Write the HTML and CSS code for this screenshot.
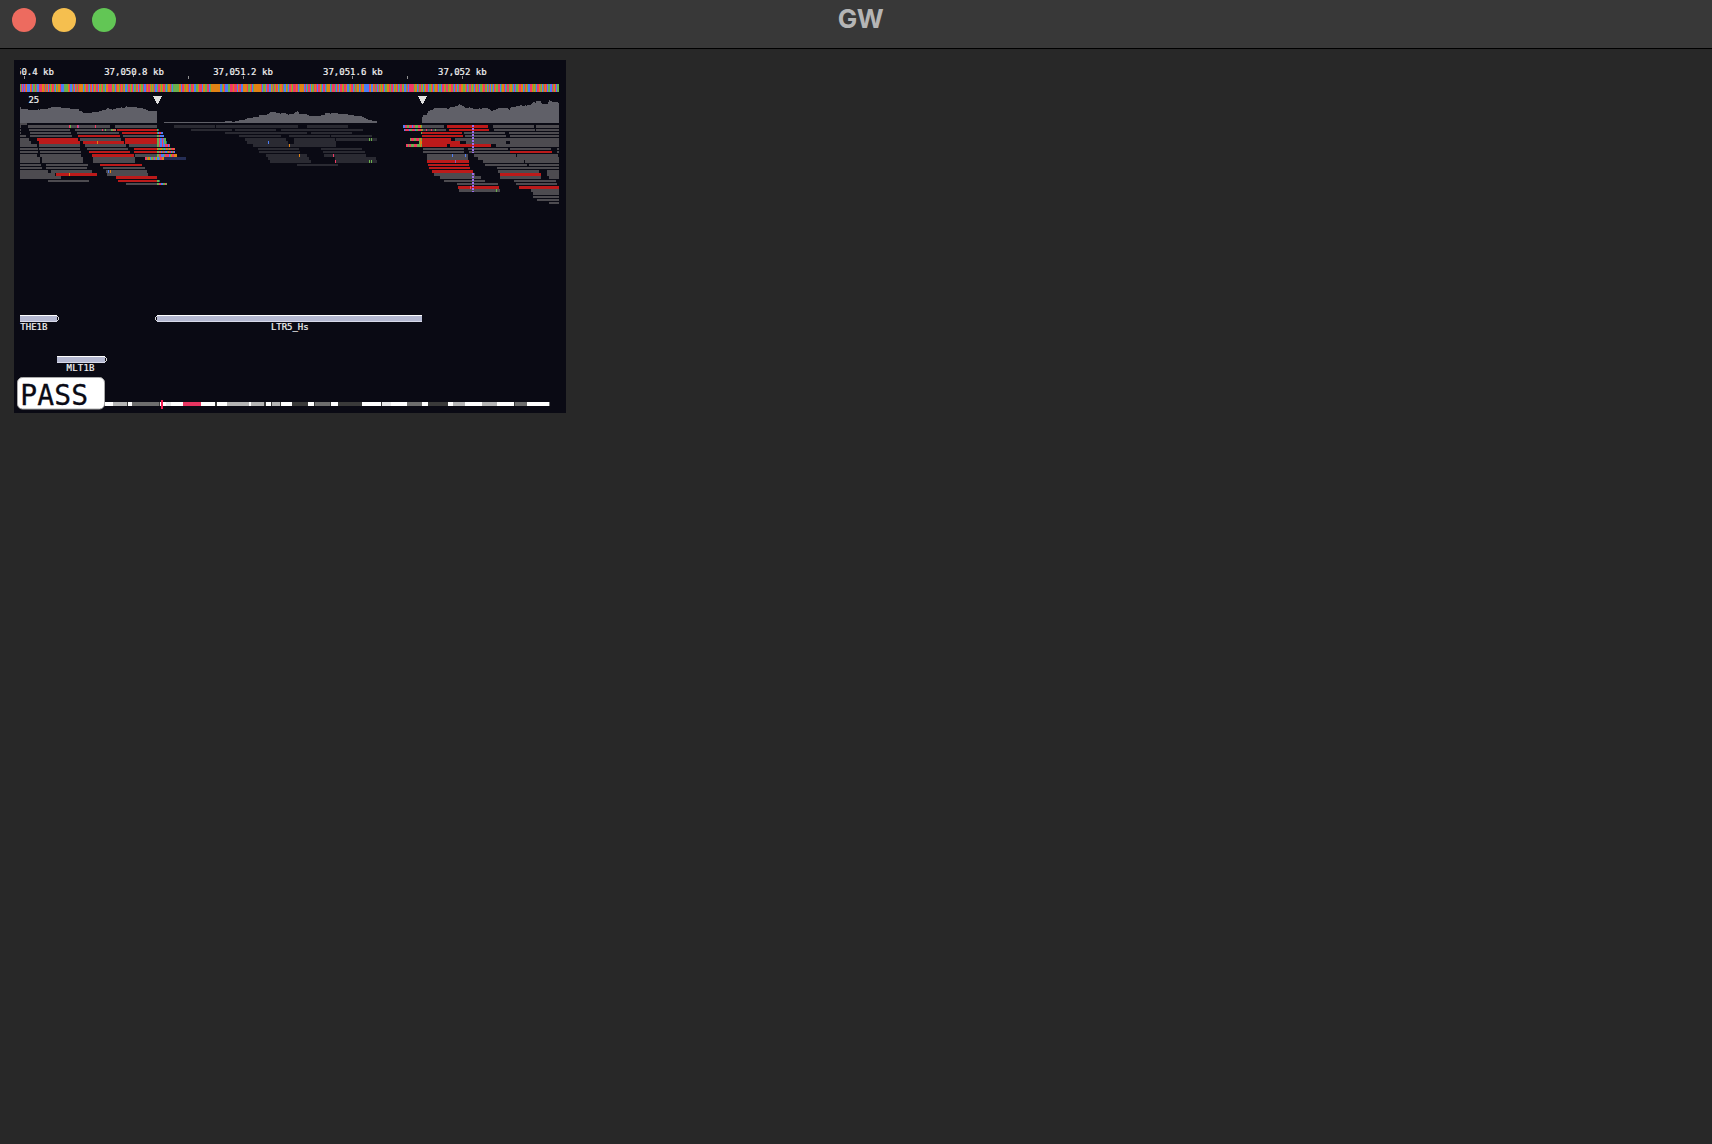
FILE: index.html
```html
<!DOCTYPE html>
<html lang="en">
<head>
<meta charset="utf-8">
<title>GW</title>
<link rel="stylesheet" href="styles.css">
</head>
<body>
<header class="titlebar">
  <div class="lights"><span class="light close"></span><span class="light minimise"></span><span class="light zoom"></span></div>
  <h1 class="title">GW</h1>
</header>
<main class="tiles">
<svg class="tile" viewBox="14 60 552 353" width="552" height="353">
  <defs><clipPath id="view"><rect x="20" y="60" width="540" height="353"/></clipPath></defs>
  <g class="scale" clip-path="url(#view)">
    <text x="-5.7" y="75" textLength="59.6">37,050.4 kb</text>
    <text x="104.2" y="75" textLength="59.6">37,050.8 kb</text>
    <text x="213.2" y="75" textLength="59.6">37,051.2 kb</text>
    <text x="323" y="75" textLength="59.6">37,051.6 kb</text>
    <text x="438" y="75" textLength="48.6">37,052 kb</text>
    <text x="28.4" y="103.4">25</text>
  </g>
  <path class="ticks" d="M24.5 76v3M133.5 75v2M188.5 76v3M243.5 76v3M352.5 76v3M407.5 76v3M462.5 76v3"/>
  <g id="sequence" class="bases"></g>
  <path class="marker" d="M153 96h9v1h-1v2h-1v2h-1v2h-1v1h-1v-1h-1v-2h-1v-2h-1v-2h-1zM418 96h9v1h-1v2h-1v2h-1v2h-1v1h-1v-1h-1v-2h-1v-2h-1v-2h-1z"/>
  <path class="coverage" d="M20 123V107H21V109H28V110H38V109H39V110H40V109H48V108H51V107H61V108H70V109H79V111H82V112H83V113H92V112H99V111H102V110H106V109H107V108H109V109H112V110H113V109H116V108H121V107H122V108H125V107H126V106H127V107H137V108H143V109H146V110H148V111H157V123Z
    M164 123V122H225V121H232V122H235V121H239V120H245V119H247V118H253V117H259V115H267V114H269V113H270V112H276V113H280V114H281V113H286V114H288V115H289V114H294V113H295V112H297V111H298V112H299V114H307V115H309V116H321V115H325V113H330V114H331V113H338V114H348V115H354V116H362V117H364V118H366V119H368V120H372V121H377V123Z
    M422 123V117H423V115H427V113H428V111H430V110H433V109H434V108H447V109H449V108H450V107H455V106H458V105H459V104H460V105H462V106H464V107H465V108H469V107H470V108H473V109H479V108H480V109H482V108H488V109H490V110H491V111H493V110H496V109H498V108H508V109H509V110H510V108H511V107H516V106H520V105H522V106H525V105H526V106H527V105H531V104H532V103H533V102H535V103H536V101H541V103H542V104H548V102H549V100H550V101H552V102H558V103H559V123Z"/>

  <g class="read-thick">
    <path class="grey" d="M20 126.5H21M28 126.5H110M115 126.5H157M20 139.5H29M80 139.5H121M20 142.5H31M20 145.5H37M39 145.5H80M85 145.5H126M129 145.5H157M20 155.5H37M40 155.5H81M135 155.5H157M20 158.5H40M42 158.5H83M93 158.5H135M20 161.5H40M42 161.5H83M93 161.5H135M20 171.5H48M51 171.5H92M106 171.5H147M20 174.5H55M107 174.5H148M20 177.5H61
      M422 126.5H444M493 126.5H534M536 126.5H559M455 139.5H559M466 142.5H506M510 142.5H559M496 145.5H559M427 155.5H468M474 155.5H516M517 155.5H558M427 158.5H468M478 158.5H559M483 161.5H524M525 161.5H559M498 171.5H539M547 171.5H559M434 174.5H475M547 174.5H559M440 177.5H481M500 177.5H541M549 177.5H559M459 190.5H500M531 190.5H559M533 193.5H559"/>
    <path class="red" d="M37 139.5H78M125 139.5H157M39 142.5H80M83 142.5H124M125 142.5H157M92 155.5H134M56 174.5H97M116 177.5H157M447 126.5H488M422 139.5H451M422 142.5H460M422 145.5H447M450 145.5H491M427 161.5H469M432 171.5H473M500 174.5H541M458 187.5H499M519 187.5H559"/>
    <path class="dim" d="M174 126.5H215M216 126.5H298M307 126.5H348M245 139.5H286M294 139.5H335M336 139.5H377M247 142.5H288M294 142.5H336M253 145.5H294M294 145.5H336M266 155.5H307M324 155.5H366M268 158.5H309M335 158.5H376M270 161.5H311M335 161.5H377"/>
    <path class="navy" d="M157 158.5H186"/>
  </g>
  <g class="read-thin">
    <path class="grey" d="M20 124H27M20 130H21M29 130H70M75 130H116M20 133H21M30 133H71M77 133H119M20 136H26M30 136H72M123 136H157M20 149H38M39 149H80M87 149H128M20 152H38M40 152H81M20 165H41M46 165H88M20 168H42M46 168H87M103 168H145M48 181H89M126 184H157
      M422 130H446M494 130H535M536 130H559M464 133H505M509 133H559M465 136H506M510 136H559M423 149H464M468 149H508M510 149H551M557 149H559M423 152H464M469 152H510M557 152H559M485 165H527M529 165H559M497 168H559M444 181H485M514 181H556M457 184H498M516 184H557M533 197H559M537 200H559M549 203H559"/>
    <path class="red" d="M117 130H157M122 133H157M78 136H120M134 149H157M89 152H130M134 152H157M100 165H142M118 181H157M449 130H489M422 133H462M422 136H463M510 152H552M428 165H469M429 168H470"/>
    <path class="dim" d="M191 130H232M235 130H276M281 130H363M225 133H307M311 133H352M239 136H281M289 136H330M331 136H372M258 149H299M321 149H362M259 152H300M323 152H365M297 165H338"/>
  </g>
  <!-- soft-clipped ends and single-base mismatches -->
  <g id="clips"></g>
  <path class="insertion" d="M473 125V153M473 173V192"/>

  <g class="features">
    <rect x="20" y="315" width="37" height="7"/><rect x="157" y="315" width="265" height="7"/><rect x="57" y="356" width="48" height="7"/>
    <path class="edge-top" d="M20 315.5H57M157 315.5H422M57 356.5H105"/>
    <path class="edge-bottom" d="M20 321.5H57M157 321.5H422M57 362.5H105"/>
    <path class="arrow" d="M57 316h1v1h1v3h-1v1h-1v-1h1v-3h-1zM157 316h-1v1h-1v3h1v1h1v-1h-1v-3h1zM105 357h1v1h1v3h-1v1h-1v-1h1v-3h-1z"/>
    <text x="20.2" y="330" textLength="27.3">THE1B</text>
    <text x="271" y="330" textLength="37.6">LTR5_Hs</text>
    <text x="66.5" y="371" textLength="28">MLT1B</text>
  </g>

  <g class="ideogram">
    <path stroke="#3a3a3a" d="M105 404H550"/>
    <path stroke="#fff" d="M105 404H113M128 404H132M160 404H166M171 404H183M201 404H215M217 404H227M249 404H251M266 404H271M281 404H292M308 404H314M331 404H338M362 404H381M391 404H407M422 404H428M448 404H453M465 404H482M497 404H514M527 404H549"/>
    <path stroke="#b4b4b4" d="M113 404H127M227 404H249M251 404H264M272 404H280M453 404H465M482 404H497"/>
    <path stroke="#6e6e6e" d="M132 404H159M315 404H330M407 404H422M515 404H527M549 404H550"/>
    <path stroke="#e8e8e8" d="M166 404H171M382 404H391"/>
    <path stroke="#e83561" d="M183 404H201"/>
    <rect x="161" y="400" width="2" height="9" fill="#f5194f"/>
  </g>
  <rect class="badge" x="17.5" y="377.5" width="87" height="31.5" rx="5"/>
  <text class="badge-text" x="20.2" y="405" textLength="68">PASS</text>
</svg>
</main>
<script src="script.js"></script>
</body>
</html>
```
FILE: styles.css
```css
body {
  margin: 0;
  height: 1144px;
  display: flex;
  flex-direction: column;
  background: #282828;
  font-family: Inter, "Liberation Sans", sans-serif;
  overflow: hidden;
}
.titlebar {
  height: 48px;
  box-sizing: content-box;
  display: grid;
  grid-template-columns: 1fr auto 1fr;
  background: #383838;
  border-bottom: 1px solid #000;
}
.lights { display: flex; gap: 16px; padding: 8px 0 0 12px; }
.light { width: 24px; height: 24px; border-radius: 50%; }
.close { background: #ed6b5f; }
.minimise { background: #f5bf4f; }
.zoom { background: #62c655; }
.title {
  margin: 0;
  padding: 3px 0 0 9px;
  font-size: 26px;
  line-height: 32px;
  font-weight: 700;
  letter-spacing: -0.5px;
  color: #b5b5b5;
}
.tiles { padding: 11px 0 0 14px; }
.tile { display: block; background: #0a0a14; shape-rendering: crispEdges; }
.tile text {
  font-family: "DejaVu Sans Mono", "Liberation Mono", monospace;
  font-size: 9px;
  fill: #f4f4f4;
  stroke: #f4f4f4;
  stroke-width: 0.2;
}
.ticks { stroke: #909090; }
.marker { fill: #e0e0e0; }
.coverage { fill: #606068; }
.read-thick path { stroke-width: 3; }
.read-thin path { stroke-width: 2; }
.grey { stroke: #4d4b50; }
.red { stroke: #bc1a1a; }
.dim { stroke: #2a2a32; }
.navy { stroke: #252e55; }
.insertion { stroke: #9b6cf0; stroke-width: 2; stroke-dasharray: 2 1; }
.features rect { fill: #b4b8d1; }
.features path { fill: none; }
.edge-top { stroke: #fff; }
.edge-bottom { stroke: #d8daea; }
.features .arrow { fill: #d8d8d8; }
.ideogram path { stroke-width: 4; }
.tile .badge { fill: #fff; stroke: #aaa; shape-rendering: auto; }
.tile .badge-text { font-size: 28px; fill: #0a0a14; stroke: #0a0a14; stroke-width: 0.3; }
```
FILE: script.js
```js
const COLOURS = { A: '#6ab04c', C: '#4c7df5', G: '#e08214', T: '#ef3b64', P: '#9a57a8', N: '#157a74' };
const NS = 'http://www.w3.org/2000/svg';

// Draws one pixel column per base, merging runs of equal letters.
function drawBases(parent, x, y, height, bases) {
  for (const run of bases.match(/(.)\1*/g)) {
    if (run[0] !== '.') {
      const rect = document.createElementNS(NS, 'rect');
      rect.setAttribute('x', x);
      rect.setAttribute('y', y);
      rect.setAttribute('width', run.length);
      rect.setAttribute('height', height);
      rect.setAttribute('fill', COLOURS[run[0]]);
      parent.appendChild(rect);
    }
    x += run.length;
  }
}

const sequence = 'ATCTCTGCCCGTCAATACCTTTGGTATGCTAGTTACGAGGTCCCAAAAGTCCATCGTATGGGGCAGTTACTGCTGATTCGAGTAACGGTTTTAGACTGGATGTAGCCATTAGTCAATGCTGAATCCTGTTGAGATCCATTGAGTTACAGGTACAAAAAAGGCTTGAGGTCATTGCCAAGTTTCGGAATTCAGGGGGGGGGCCAGTCCCAATTTGTTTCGTTCCGGGGTAAGTCAGGGGGGGTCA'
  + 'AGCTTCCGATAGTGCAGGTACCGACTTGATTTGTCAGGGGCTCATTCGAATGTCTTGACTTCAGGGCATTTACTGCTTGATTGCCAGTTCATAGGCATGGCCCCCTGCC'
  + 'GTATCATGAGTCAAGGTATTCGAGTCATTAGCCATCTTTTTAGGCATTAGCAGTTCAAGTCAGGTCAACTTGATTAGGTTACTGCATTGGAAGTCATTAGACTGATCAAGTTAGCATCGACTGAATTCAGGTCATTAGGACTCAAGTTGGCATGACCTTGAGACTTGAGCATGTCAACCTAGTCAAGGTCATGTCAGATCAAGGTAACGAAAT';
drawBases(document.getElementById('sequence'), 20, 84, 8, sequence.slice(0, 539));

const clips = document.getElementById('clips');
[
  [69, 125, 3, 'TA......TP................T'], [102, 129, 2, 'T..A.....AATAT'],
  [157, 129, 2, 'AN'], [157, 132, 2, 'ACTTCC'], [157, 135, 2, 'AATCCCC'],
  [157, 138, 3, 'AATCCTCAA'], [157, 141, 3, 'AATCCTCAAN'], [157, 144, 3, 'AATCCTCCTTTCT'],
  [157, 148, 2, 'GAAGGAACAGTAGATTGT'], [157, 151, 2, 'AATGCTATCCAGTTCATC'],
  [157, 154, 3, 'AATTCCCATTTTCAGTTGGG'], [145, 157, 3, 'TTAGGCAATCAGCCATTGG'],
  [157, 180, 2, 'AAN'], [157, 183, 2, 'AATTCCAATA'],
  [97, 141, 3, 'G'], [69, 173, 3, 'G'], [108, 170, 3, 'C.G'],
  [268, 141, 3, 'C'], [289, 144, 3, 'G'], [299, 154, 3, 'G'],
  [333, 154, 3, 'T'], [335, 160, 3, 'T'],
  [369, 138, 3, 'A.A'], [369, 160, 3, 'A.A'],
  [403, 125, 3, 'CCTTAATTTCTTAAATTGA'], [404, 129, 2, 'CTTTTCAATTTCAATTTGA...T....T...A'],
  [421, 132, 2, 'A'], [410, 138, 3, 'ATTTAATTTAGA'], [419, 141, 3, 'AGG'], [406, 144, 3, 'TTATTAAATTTAAAGA'],
  [452, 154, 3, 'C'], [465, 154, 3, 'C'], [455, 160, 3, 'P'], [470, 186, 3, 'T'], [496, 189, 3, 'A']
].forEach(([x, y, height, bases]) => drawBases(clips, x, y, height, bases));
```
